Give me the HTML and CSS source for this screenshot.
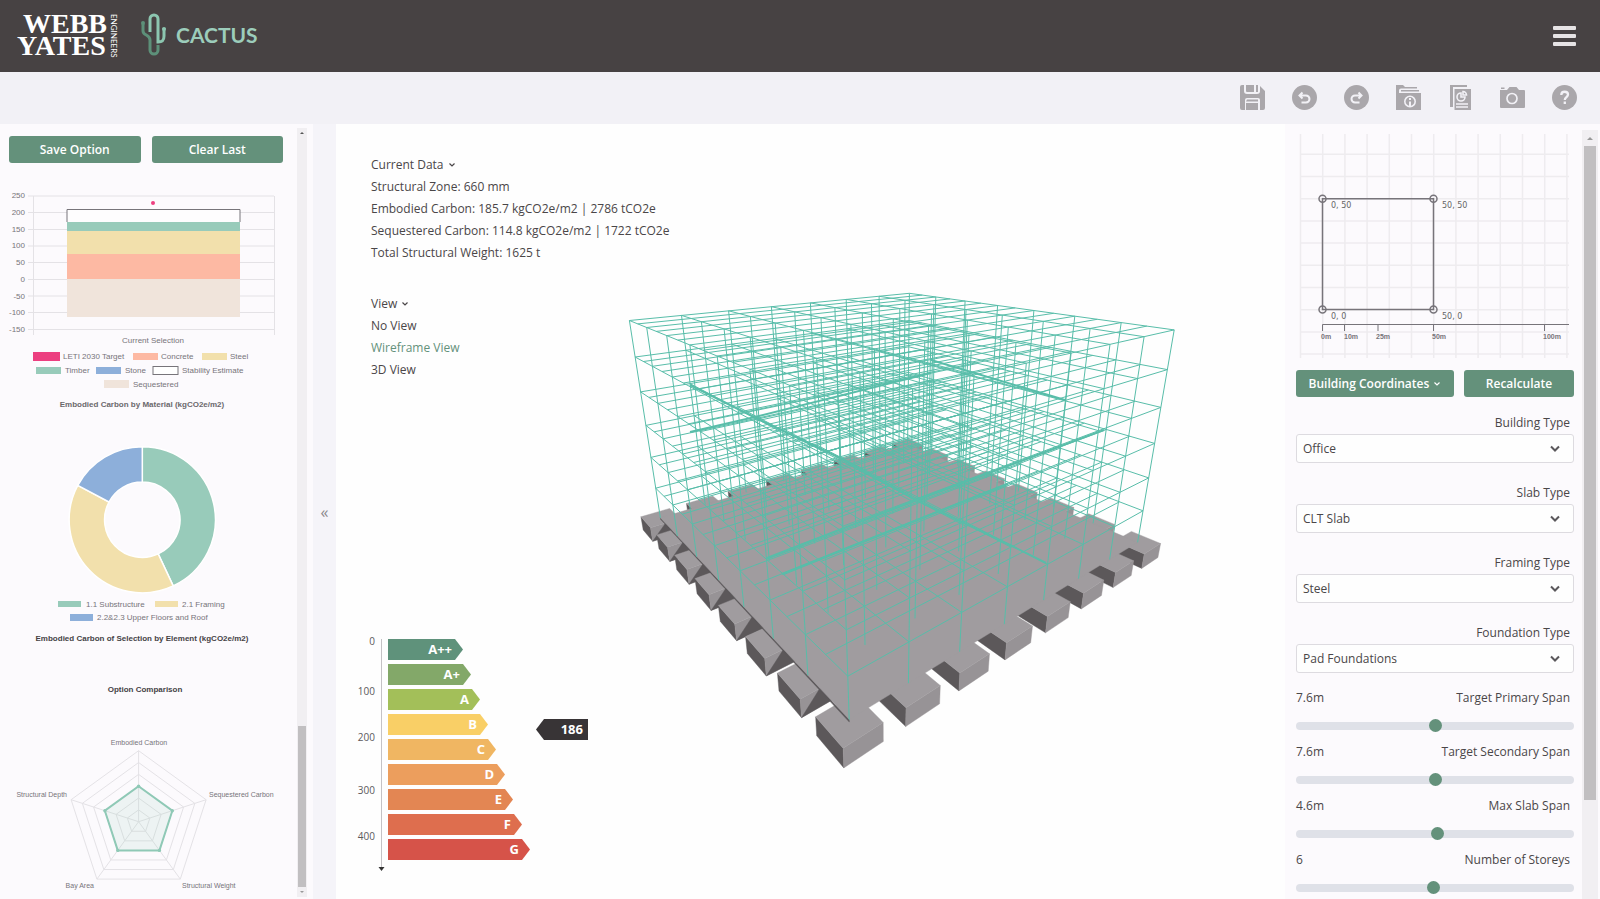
FILE: index.html
```html
<!DOCTYPE html>
<html lang="en">
<head>
<meta charset="utf-8">
<title>Cactus</title>
<link rel="stylesheet" href="styles.css">
</head>
<body>
<header class="header">
  <svg class="logo-webb" viewBox="0 0 104 44" role="img" aria-label="Webb Yates Engineers">
    <text class="webb" x="6" y="19">WEBB</text>
    <text class="webb" x="0" y="41">YATES</text>
    <text class="engineers" transform="translate(94 0) rotate(90)" x="0" y="0">ENGINEERS</text>
  </svg>
  <svg class="logo-cactus" viewBox="0 0 120 44" role="img" aria-label="Cactus">
    <g fill="none" stroke-width="3">
      <path stroke="#5d9079" d="M4 10v7c0 5 7 3 7 9v10a4 4 0 0 0 8 0v-5"/>
      <path stroke="#8cc6b0" d="M11 18V5a4 4 0 0 1 8 0v23c5 0 6-2 6-6v-8"/>
    </g>
    <circle cx="4" cy="9" r="2" fill="#5d9079"/>
    <circle cx="25" cy="15" r="2" fill="#8cc6b0"/>
    <text class="cactus" x="37" y="29">CACTUS</text>
  </svg>
  <button class="menu" aria-label="Menu"><i></i><i></i><i></i></button>
</header>

<nav class="toolbar" aria-label="Tools">
  <button aria-label="Save"><svg viewBox="0 0 26 26"><path fill="#aaa7ab" d="M2 0h2v6q0 3 3 3h10q3 0 3-3V1l5 5v17q0 2-2 2h-3V15q0-2-2-2H7q-2 0-2 2v10H2q-2 0-2-2V2Q0 0 2 0zM6 0h8v7H7q-1 0-1-1zM16 0h2v7h-2zM7 14.500h11v2H6zM6 18h12v7H6z"/></svg></button>
  <button aria-label="Undo"><svg viewBox="0 0 26 26"><circle cx="12.500" cy="12.500" r="12.500" fill="#aaa7ab"/><path fill="none" stroke="#f2f1f6" stroke-width="2" d="M10.500 7.500L7.500 10.500l3 3M8 10.500h6a3.500 3.500 0 0 1 0 7H9.500"/></svg></button>
  <button aria-label="Redo"><svg viewBox="0 0 26 26"><circle cx="12.500" cy="12.500" r="12.500" fill="#aaa7ab"/><path fill="none" stroke="#f2f1f6" stroke-width="2" d="M14.500 7.500l3 3-3 3M17 10.500h-6a3.500 3.500 0 0 0 0 7h4.500"/></svg></button>
  <button aria-label="Project information"><svg viewBox="0 0 26 26"><path fill="#aaa7ab" d="M0 0h7l2 2h12v1.500H5q-2 0-2 2V25H0zM5 5h18v1.500H5zM3 8h22v17H3z"/><circle cx="14" cy="16.500" r="5.200" fill="none" stroke="#f2f1f6" stroke-width="1.600"/><path stroke="#f2f1f6" stroke-width="2" d="M14 13v2M14 16.500V21"/></svg></button>
  <button aria-label="Report"><svg viewBox="0 0 26 26"><path fill="#aaa7ab" d="M2 0h17v2H5v20H2zM6.500 4H23v21H6.500z"/><path fill="none" stroke="#f2f1f6" stroke-width="1.600" d="M13 8a4 4 0 1 0 4 4h-4zM15 6.500V10h3.500A3.500 3.500 0 0 0 15 6.500zM8 19h12M8 22h12"/></svg></button>
  <button aria-label="Screenshot"><svg viewBox="0 0 26 26"><path fill="#aaa7ab" d="M1 2.500h3.500V4H1zM0 5h7l2.500-3h7L19 5h5q1 0 1 1v16q0 1-1 1H1q-1 0-1-1z"/><circle cx="12" cy="13.500" r="5" fill="none" stroke="#f2f1f6" stroke-width="1.700"/></svg></button>
  <button aria-label="Help"><svg viewBox="0 0 26 26"><circle cx="12.500" cy="12.500" r="12.500" fill="#aaa7ab"/><path fill="none" stroke="#f2f1f6" stroke-width="2.300" d="M9.300 10c0-4.500 6.700-4 6.700-.5 0 2.500-3.200 2.700-3.200 5.500M12.800 16.500V19"/></svg></button>
</nav>

<main class="workspace">
  <aside class="charts">
    <div class="charts-body">
      <div class="chart-actions">
        <button class="btn">Save Option</button>
        <button class="btn">Clear Last</button>
      </div>

      <svg class="chart" viewBox="0 180 297 235" role="img" aria-label="Embodied Carbon by Material">
        <g stroke="#e4e2e6" stroke-width="1">
          <path d="M28 196h246M28 212.500h246M28 229.500h246M28 246h246M28 262.500h246M28 279.500h246M28 296h246M28 312.500h246M28 329.500h246"/>
          <path d="M33.500 196v139M274.500 196v139"/>
        </g>
        <rect x="67" y="279" width="173" height="38" fill="#f0e4db"/>
        <rect x="67" y="254" width="173" height="25" fill="#fdb9a3"/>
        <rect x="67" y="231" width="173" height="23" fill="#f2e0ac"/>
        <rect x="67" y="222" width="173" height="9" fill="#98cbba"/>
        <path d="M67 222v-12.500h173V222" fill="#fefdfe" stroke="#77747a"/>
        <circle cx="153" cy="203" r="2" fill="#ec3f80"/>
        <g class="tick" text-anchor="end">
          <text x="25" y="198">250</text><text x="25" y="215">200</text><text x="25" y="232">150</text><text x="25" y="248">100</text><text x="25" y="265">50</text><text x="25" y="282">0</text><text x="25" y="299">-50</text><text x="25" y="315">-100</text><text x="25" y="332">-150</text>
        </g>
        <g class="tick">
          <text x="153" y="343" text-anchor="middle">Current Selection</text>
          <rect x="33" y="352" width="27" height="9" fill="#ec3f80"/><text x="63" y="359">LETI 2030 Target</text>
          <rect x="133" y="353" width="25" height="7" fill="#fdb9a3"/><text x="161" y="359">Concrete</text>
          <rect x="202" y="353" width="25" height="7" fill="#f2e0ac"/><text x="230" y="359">Steel</text>
          <rect x="36" y="367" width="25" height="7" fill="#98cbba"/><text x="65" y="373">Timber</text>
          <rect x="96" y="367" width="25" height="7" fill="#8dafda"/><text x="125" y="373">Stone</text>
          <rect x="153" y="366.500" width="25" height="8" fill="#fff" stroke="#77747a"/><text x="182" y="373">Stability Estimate</text>
          <rect x="104" y="380" width="25" height="8" fill="#f0e4db"/><text x="133" y="387">Sequestered</text>
        </g>
        <text class="caption" x="142" y="407">Embodied Carbon by Material (kgCO2e/m2)</text>
      </svg>

      <svg class="chart" viewBox="0 415 297 235" role="img" aria-label="Embodied Carbon of Selection by Element">
        <g stroke="#fff" stroke-width="1.500">
          <path fill="#98cbba" d="M142.300 446.700A73 73 0 0 1 173.200 585.900L158.200 553.900A37.700 37.700 0 0 0 142.300 482z"/>
          <path fill="#f2e0ac" d="M173.200 585.900A73 73 0 0 1 77.800 485.400L109 502A37.700 37.700 0 0 0 158.200 553.900z"/>
          <path fill="#8dafda" d="M77.800 485.400A73 73 0 0 1 142.300 446.700V482A37.700 37.700 0 0 0 109 502z"/>
        </g>
        <g class="tick">
          <rect x="58" y="601" width="23" height="6" fill="#98cbba"/><text x="86" y="607">1.1 Substructure</text>
          <rect x="155" y="601" width="23" height="6" fill="#f2e0ac"/><text x="182" y="607">2.1 Framing</text>
          <rect x="70" y="614" width="23" height="7" fill="#8dafda"/><text x="97" y="620">2.2&amp;2.3 Upper Floors and Roof</text>
        </g>
        <text class="caption dark" x="142" y="641">Embodied Carbon of Selection by Element (kgCO2e/m2)</text>
      </svg>

      <svg class="chart" viewBox="0 650 297 248" role="img" aria-label="Option Comparison">
        <defs><polygon id="ring" points="0,-71 67.500,-22 41.700,57.400 -41.700,57.400 -67.500,-22" vector-effect="non-scaling-stroke"/></defs>
        <text class="caption dark" x="145" y="692">Option Comparison</text>
        <g transform="translate(138.600 821.700)" fill="none" stroke="#e4e2e6" stroke-width="1">
          <use href="#ring"/><use href="#ring" transform="scale(.8333)"/><use href="#ring" transform="scale(.6667)"/><use href="#ring" transform="scale(.5)"/><use href="#ring" transform="scale(.3333)"/><use href="#ring" transform="scale(.1667)"/>
          <path d="M0 0V-71M0 0L67.500-22M0 0L41.700 57.400M0 0L-41.700 57.400M0 0L-67.500-22"/>
          <use href="#ring" transform="scale(.5)" fill="#98cbba" fill-opacity=".14" stroke="#8fc9b6" stroke-width="2"/>
          <g fill="#8fc9b6" stroke="none"><circle cy="-35.500" r="1.700"/><circle cx="33.700" cy="-11" r="1.700"/><circle cx="20.800" cy="28.700" r="1.700"/><circle cx="-20.800" cy="28.700" r="1.700"/><circle cx="-33.700" cy="-11" r="1.700"/></g>
        </g>
        <g class="tick small">
          <text x="139" y="745" text-anchor="middle">Embodied Carbon</text>
          <text x="209" y="797">Sequestered Carbon</text>
          <text x="182" y="888">Structural Weight</text>
          <text x="94" y="888" text-anchor="end">Bay Area</text>
          <text x="67" y="797" text-anchor="end">Structural Depth</text>
        </g>
      </svg>
    </div>
    <div class="scroll scroll-left"><b class="up"></b><span class="space"></span><span class="thumb"></span><b class="down"></b></div>
  </aside>

  <button class="collapse" aria-label="Collapse charts">«</button>

  <section class="viewer">
    <svg class="model" id="model" viewBox="336 124 949 775" preserveAspectRatio="xMidYMid meet" role="img" aria-label="Wireframe model"></svg>
    <div class="info">
      <h2>Current Data <svg class="chev" viewBox="0 0 8 8"><path d="M1.500 2.500L4 5l2.500-2.500"/></svg></h2>
      <p>Structural Zone: 660 mm</p>
      <p>Embodied Carbon: 185.7 kgCO2e/m2 | 2786 tCO2e</p>
      <p>Sequestered Carbon: 114.8 kgCO2e/m2 | 1722 tCO2e</p>
      <p>Total Structural Weight: 1625 t</p>
    </div>
    <div class="views">
      <h2>View <svg class="chev" viewBox="0 0 8 8"><path d="M1.500 2.500L4 5l2.500-2.500"/></svg></h2>
      <button>No View</button>
      <button class="active">Wireframe View</button>
      <button>3D View</button>
    </div>
    <div class="rating">
      <svg class="axis" viewBox="0 0 32 240" aria-label="Carbon scale">
        <path d="M25.500 2v230" stroke="#c4c2c5"/><path d="M22.500 230h6l-3 4z" fill="#333"/>
        <g text-anchor="end"><text x="19" y="8">0</text><text x="19" y="58">100</text><text x="19" y="104">200</text><text x="19" y="157">300</text><text x="19" y="203">400</text></g>
      </svg>
      <ol class="bands">
        <li class="b0">A++</li><li class="b1">A+</li><li class="b2">A</li><li class="b3">B</li><li class="b4">C</li><li class="b5">D</li><li class="b6">E</li><li class="b7">F</li><li class="b8">G</li>
      </ol>
      <div class="marker">186</div>
    </div>
  </section>

  <aside class="params">
    <div class="params-body">
      <svg class="plan" viewBox="1296 134 278 225" role="img" aria-label="Building plan" id="plan">
        <g id="plan-grid" stroke="#eeecef" stroke-width="1.500"></g>
        <g fill="none" stroke="#77747a" stroke-width="1.500">
          <path d="M1322.500 198.700h111v110.800h-111z"/>
          <circle cx="1322.500" cy="198.700" r="3.500"/><circle cx="1433.500" cy="198.700" r="3.500"/><circle cx="1322.500" cy="309.500" r="3.500"/><circle cx="1433.500" cy="309.500" r="3.500"/>
          <path stroke-width="1" d="M1322.500 331v-6.500H1569M1344.500 324v7M1378 324v7M1433.500 324v7M1544.500 324v7"/>
        </g>
        <g class="coord"><text x="1331" y="208">0, 50</text><text x="1442" y="208">50, 50</text><text x="1331" y="319">0, 0</text><text x="1442" y="319">50, 0</text></g>
        <g class="metre"><text x="1321" y="339">0m</text><text x="1344" y="339">10m</text><text x="1376" y="339">25m</text><text x="1432" y="339">50m</text><text x="1543" y="339">100m</text></g>
      </svg>
      <div class="param-actions">
        <button class="btn wide">Building Coordinates <svg class="chev" viewBox="0 0 8 8"><path d="M1.500 2.500L4 5l2.500-2.500"/></svg></button>
        <button class="btn">Recalculate</button>
      </div>
      <div class="field"><label for="building">Building Type</label><div class="pick"><select id="building"><option>Office</option></select><svg viewBox="0 0 12 8"><path d="M2 1.500l4 4 4-4"/></svg></div></div>
      <div class="field"><label for="slab">Slab Type</label><div class="pick"><select id="slab"><option>CLT Slab</option></select><svg viewBox="0 0 12 8"><path d="M2 1.500l4 4 4-4"/></svg></div></div>
      <div class="field"><label for="framing">Framing Type</label><div class="pick"><select id="framing"><option>Steel</option></select><svg viewBox="0 0 12 8"><path d="M2 1.500l4 4 4-4"/></svg></div></div>
      <div class="field"><label for="foundation">Foundation Type</label><div class="pick"><select id="foundation"><option>Pad Foundations</option></select><svg viewBox="0 0 12 8"><path d="M2 1.500l4 4 4-4"/></svg></div></div>
      <div class="range"><output for="primary">7.6m</output><label for="primary">Target Primary Span</label><input id="primary" type="range" min="0" max="1000" value="502"></div>
      <div class="range"><output for="secondary">7.6m</output><label for="secondary">Target Secondary Span</label><input id="secondary" type="range" min="0" max="1000" value="502"></div>
      <div class="range"><output for="slabspan">4.6m</output><label for="slabspan">Max Slab Span</label><input id="slabspan" type="range" min="0" max="1000" value="511"></div>
      <div class="range"><output for="storeys">6</output><label for="storeys">Number of Storeys</label><input id="storeys" type="range" min="0" max="1000" value="494"></div>
    </div>
    <div class="scroll scroll-right"><b class="up"></b><span class="thumb"></span></div>
  </aside>
</main>
<script src="model.js"></script>
</body>
</html>
```
FILE: styles.css
```css
* { box-sizing: border-box; }
html, body { height: 100%; }
body {
  margin: 0;
  display: flex;
  flex-direction: column;
  overflow: hidden;
  font: 12px/22px "Open Sans", sans-serif;
  color: #4a4648;
  background: #fefefe;
}
button { font: inherit; color: inherit; border: 0; padding: 0; background: none; cursor: pointer; }
h2, p, ol { margin: 0; padding: 0; font-size: 12px; }

.header { flex: none; height: 72px; background: #474243; display: flex; align-items: center; padding: 0 24px 0 17px; }
.header svg { overflow: visible; }
.logo-webb { width: 104px; height: 44px; }
.webb { font: bold 28px "Liberation Serif", serif; fill: #fff; }
.engineers { font: 8px Lato, sans-serif; fill: #fff; }
.logo-cactus { width: 120px; height: 44px; margin-left: 18px; }
.cactus { font: bold 21px Lato, sans-serif; fill: #9ccdbb; }
.menu { margin-left: auto; width: 23px; display: flex; flex-direction: column; gap: 4px; }
.menu i { height: 4px; border-radius: 1px; background: #e6e3e5; }

.toolbar { flex: none; height: 52px; background: #f2f1f6; display: flex; align-items: center; justify-content: flex-end; gap: 26px; padding-right: 22px; }
.toolbar button, .toolbar svg { width: 26px; height: 26px; display: block; }

.workspace { flex: 1; min-height: 0; display: flex; }

.charts { flex: none; width: 313px; display: flex; background: #fcfafd; padding-right: 6px; }
.charts-body { flex: 1; overflow: hidden; }
.chart-actions { display: flex; gap: 11px; height: 56px; padding: 12px 14px 17px 9px; }
.btn { flex: 1; height: 27px; border-radius: 3px; background: #64917b; color: #fff; font-weight: 600; }
.chart { display: block; width: 100%; }
.tick { font: 8px "Liberation Sans", Arial, sans-serif; fill: #77747a; }
.small { font-size: 7px; }
.caption { font: bold 8px "Liberation Sans", Arial, sans-serif; fill: #6b686c; text-anchor: middle; }
.caption.dark { fill: #454246; }

.scroll { flex: none; display: flex; flex-direction: column; align-items: center; background: #f1eff2; }
.scroll-left { width: 10px; margin: 4px 0 2px; padding: 4px 0; }
.scroll-left .space { flex: 589; }
.scroll-left .thumb { flex: 161; width: 8px; background: #c1bfc1; }
.scroll-left b { margin: 0 0 3px; }
.scroll-left .down { margin: 4px 0 0; }
.scroll-right { width: 16px; margin: 6px 2px 0 0; }
.scroll-right .thumb { width: 12px; height: 85%; background: #c1bfc1; }
.up, .down { border: 2px solid transparent; }
.up { border-bottom-color: #555; border-top: 0; }
.down { border-top-color: #999; border-bottom: 0; }
.scroll-right .up { margin: 7px 0 6px; border-width: 0 3px 3px; border-bottom-color: #999; }

.collapse { flex: none; width: 23px; background: #f5f4f9; color: #8b888d; font-size: 16px; }

.viewer { flex: 1; min-width: 0; position: relative; display: flex; flex-direction: column; padding: 30px 0 22px 35px; }
.model { position: absolute; inset: 0; width: 100%; height: 100%; }
.info, .views, .rating { position: relative; }
.viewer h2 { font-weight: 500; }
.chev { width: 8px; height: 8px; margin-left: 1px; }
.chev path { fill: none; stroke: currentColor; stroke-width: 1.2; }
.views { margin-top: 29px; display: flex; flex-direction: column; align-items: flex-start; }
.views .active { color: #64917b; }
.rating { margin-top: auto; margin-left: -15px; display: flex; }
.axis { flex: none; width: 32px; height: 240px; margin-top: 6px; overflow: visible; }
.axis text { font: 10px "Open Sans", sans-serif; fill: #5c595c; }
.bands { list-style: none; display: flex; flex-direction: column; gap: 4px; padding: 8px 0 0 0; width: 148px; font-size: 13px; }
.bands li { height: 21px; line-height: 20px; padding-right: 11px; text-align: right; font-weight: 700; color: #fff; clip-path: polygon(0 0, calc(100% - 8px) 0, 100% 50%, calc(100% - 8px) 100%, 0 100%); }
.b0 { width: 75px; background: #5f927b; }
.b1 { width: 83px; background: #83a869; }
.b2 { width: 92px; background: #a3bf59; }
.b3 { width: 100px; background: #f9cf66; }
.b4 { width: 108px; background: #f0b662; }
.b5 { width: 117px; background: #ec9e5d; }
.b6 { width: 125px; background: #e38653; }
.b7 { width: 134px; background: #de6e4e; }
.b8 { width: 142px; background: #d65349; }
.marker { width: 52px; height: 21px; margin-top: 88px; line-height: 20px; padding-right: 5px; text-align: right; background: #383436; color: #fff; font-size: 13px; font-weight: 700; clip-path: polygon(8px 0, 100% 0, 100% 100%, 8px 100%, 0 50%); }

.params { flex: none; width: 315px; background: #fcfafd; display: flex; }
.params-body { flex: 1; overflow: hidden; padding: 10px 8px 0 11px; }
.plan { display: block; width: 100%; }
.coord { font: 8px "DejaVu Sans", sans-serif; fill: #666; }
.metre { font: bold 7px "Liberation Sans", sans-serif; fill: #77747a; }
.param-actions { display: flex; gap: 10px; padding: 11px 0 16px; }
.param-actions .btn { flex: 110; }
.param-actions .wide { flex: 158; }
.field { display: flex; flex-direction: column; gap: 1px; margin-bottom: 20px; }
.field label, .range label { font-weight: 500; line-height: 20px; text-align: right; padding-right: 4px; }
.pick { position: relative; }
.pick select { appearance: none; display: block; width: 100%; height: 29px; border: 1px solid #dddbe0; border-radius: 3px; background: #fefefe; padding: 0 6px; font: inherit; color: inherit; }
.pick svg { position: absolute; right: 13px; top: 11px; width: 12px; height: 8px; pointer-events: none; }
.pick path { fill: none; stroke: #5a575b; stroke-width: 2; }
.range { display: grid; grid-template-columns: auto 1fr; row-gap: 10px; margin-bottom: 8px; }
.field + .range { margin-top: -5px; }
.range output { font-weight: 500; line-height: 20px; }
.range input { grid-column: 1 / -1; appearance: none; width: 100%; height: 16px; margin: 0; background: none; }
.range input::-webkit-slider-runnable-track { height: 8px; border-radius: 4px; background: #dfe1e8; }
.range input::-webkit-slider-thumb { appearance: none; width: 13px; height: 13px; margin-top: -3px; border-radius: 50%; background: #64917b; }
```
FILE: model.js
```js
const NS = 'http://www.w3.org/2000/svg';
const BAYS = 7, STOREYS = 6;

// Perspective camera: columns for one bay on each plan axis, one storey, and the origin.
const U = [130.71705, 17.34675, 0.07869];
const V = [37.05848, 21.37382, 0.09696];
const W = [-29.63787, -65.87443, -0.0333];
const O = [849.20344, 719.5656, 1];

function project(u, v, w) {
  const p = [0, 1, 2].map(k => O[k] + u * U[k] + v * V[k] + w * W[k]);
  return (p[0] / p[2]).toFixed(1) + ' ' + (p[1] / p[2]).toFixed(1);
}

function add(parent, name, attrs) {
  const el = document.createElementNS(NS, name);
  for (const key in attrs) el.setAttribute(key, attrs[key]);
  parent.appendChild(el);
  return el;
}

const model = document.getElementById('model');
const face = (points, fill) => add(model, 'polygon', {
  points: points.map(p => project(...p)).join(' '), fill, stroke: fill, 'stroke-width': 0.4
});

// Pad foundations, drawn from the back of the building to the front.
const s = 0.31, d = -0.46;
for (let i = BAYS; i >= 0; i--) {
  for (let j = BAYS; j >= 0; j--) {
    if (i % BAYS && j % BAYS) continue;
    const a = i - s, b = i + s, c = j - s, e = j + s;
    face([[a, c, 0], [a, e, 0], [a, e, d], [a, c, d]], '#5c585a');
    face([[a, c, 0], [b, c, 0], [b, c, d], [a, c, d]], '#979396');
    if (i === 0 && j > 0) face([[i, c, 0], [b, c, 0], [b, c, d], [a, c, d]], '#5c585a');
    face([[a, c, 0], [b, c, 0], [b, e, 0], [a, e, 0]], '#a09c9f');
  }
}
face([[0, 0, 0], [0, BAYS, 0], [0, BAYS, -0.06], [0, 0, -0.06]], '#5c585a');
face([[0, 0, 0], [BAYS, 0, 0], [BAYS, BAYS, 0], [0, BAYS, 0]], '#a09c9f');

// Structural frame: columns, primary beams and secondary beams.
let path = '';
const line = (p, q) => { path += 'M' + project(...p) + 'L' + project(...q); };
for (let i = 0; i <= BAYS; i++) {
  for (let j = 0; j <= BAYS; j++) line([i, j, 0], [i, j, STOREYS]);
}
for (let w = 1; w <= STOREYS; w++) {
  for (let i = 0; i <= BAYS; i++) line([i, 0, w], [i, BAYS, w]);
  for (let j = 0; j <= BAYS * 2; j++) line([0, j / 2, w], [BAYS, j / 2, w]);
}
add(model, 'path', { d: path, fill: 'none', stroke: '#58bda9', 'stroke-width': 1 });

// Sight lines where beams of several floors fall on each other.
add(model, 'path', {
  d: 'M690 385L756 418L840 458L916 500L1012 546L1046 563M767 558L916 500L1104 430M782 574L937 512L1008 484M931 360L1065 400M690 432L755 417L931 373',
  fill: 'none', stroke: '#58bda9', 'stroke-width': 2
});

// Plan grid at ten metre spacing.
const grid = document.getElementById('plan-grid');
let lines = '';
for (let i = 0; i < 13; i++) lines += `M${(1300.5 + i * 22.2).toFixed(1)} 134V358`;
for (let i = 0; i < 10; i++) lines += `M1300 ${(154.3 + i * 22.2).toFixed(1)}H1569`;
add(grid, 'path', { d: lines });
```
